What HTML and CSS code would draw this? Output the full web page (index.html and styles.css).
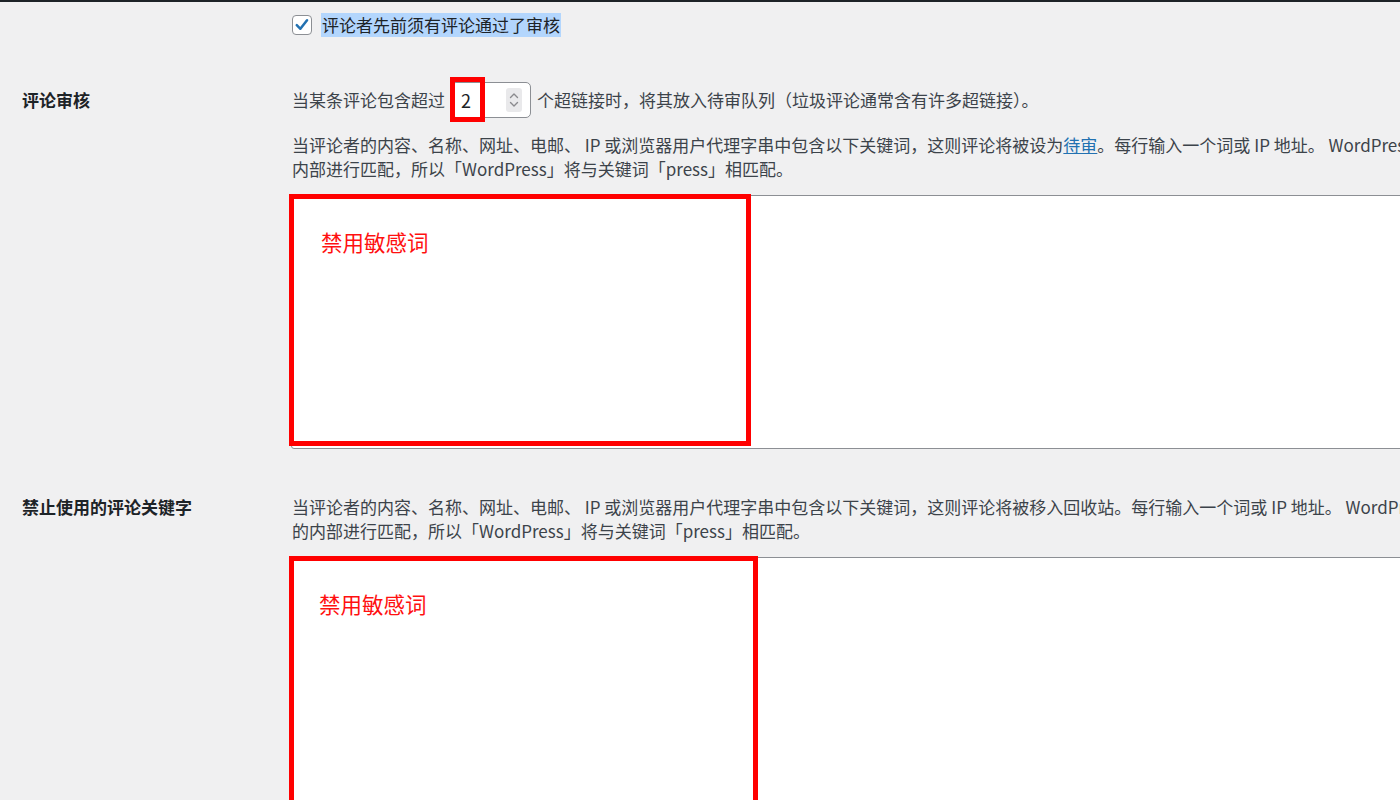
FILE: index.html
```html
<!DOCTYPE html>
<html lang="zh-CN">
<head>
<meta charset="utf-8">
<title>讨论设置</title>
<link rel="stylesheet" href="styles.css">
</head>
<body>
<div class="page">
  <div class="row row-check">
    <div class="th"></div>
    <div class="td">
      <label class="check-line">
        <span class="checkbox">
          <svg viewBox="0 0 20 20" width="20" height="20"><path d="M4.2 10.2 L8.2 14.2 L15.6 4.8" fill="none" stroke="#2271b1" stroke-width="2.8" stroke-linecap="round" stroke-linejoin="round"/></svg>
        </span>
        <span class="selected">评论者先前须有评论通过了审核</span>
      </label>
    </div>
  </div>

  <div class="row row-moderation">
    <div class="th th-input">评论审核</div>
    <div class="td">
      <div class="inline-line">
        <span>当某条评论包含超过</span>
        <span class="number-wrap">
          <span class="number-input">
            <span class="number-value">2</span>
            <span class="spinner">
              <svg viewBox="0 0 16 24" width="16" height="24"><rect x="0" y="0" width="16" height="24" rx="3" fill="#e9e9eb"/><path d="M4.5 9.5 L8 6 L11.5 9.5" fill="none" stroke="#8a8a8e" stroke-width="1.4" stroke-linecap="round" stroke-linejoin="round"/><path d="M4.5 14.5 L8 18 L11.5 14.5" fill="none" stroke="#8a8a8e" stroke-width="1.4" stroke-linecap="round" stroke-linejoin="round"/></svg>
            </span>
          </span>
          <span class="mark mark-number"></span>
        </span>
        <span>个超链接时，将其放入待审队列（垃圾评论通常含有许多超链接）。</span>
      </div>
      <p class="desc desc-first">当评论者的内容、名称、网址、电邮、 IP 或浏览器用户代理字串中包含以下关键词，这则评论将被设为<a href="#">待审</a>。每行输入一个词或 IP 地址。 WordPress 将在词语的内部进行匹配，所以「WordPress」将与关键词「press」相匹配。</p>
      <div class="field">
        <div class="textarea ta-1"></div>
        <div class="mark mark-area mark-area-1"><span class="mark-text">禁用敏感词</span></div>
      </div>
    </div>
  </div>

  <div class="row row-disallowed">
    <div class="th">禁止使用的评论关键字</div>
    <div class="td">
      <p class="desc">当评论者的内容、名称、网址、电邮、 IP 或浏览器用户代理字串中包含以下关键词，这则评论将被移入回收站。每行输入一个词或 IP 地址。 WordPress 将在词语的内部进行匹配，所以「WordPress」将与关键词「press」相匹配。</p>
      <div class="field">
        <div class="textarea ta-2"></div>
        <div class="mark mark-area mark-area-2"><span class="mark-text">禁用敏感词</span></div>
      </div>
    </div>
  </div>
</div>
</body>
</html>
```

FILE: styles.css
```css
html, body {
  margin: 0;
  padding: 0;
  overflow: hidden;
  background: #f0f0f1;
}

body {
  font-family: "Noto Sans CJK SC", "Noto Sans", sans-serif;
  font-size: 17px;
  line-height: 24px;
  color: #3c434a;
  width: 1400px;
  height: 800px;
}

.page {
  border-top: 2px solid #1d2327;
  padding-left: 22px;
  width: 1600px;
}

.row {
  display: grid;
  grid-template-columns: 270px 1214px;
}

.th {
  color: #1d2327;
  font-weight: 600;
  line-height: 24px;
}

.row-check {
  margin-top: 11px;
}

.check-line {
  display: flex;
  align-items: center;
  height: 24px;
  color: #1d2327;
}

.checkbox {
  box-sizing: border-box;
  width: 20px;
  height: 20px;
  border: 1.5px solid #8c8f94;
  border-radius: 4px;
  background: #fff;
  display: flex;
  align-items: center;
  justify-content: center;
  margin-right: 9px;
}

.checkbox svg {
  display: block;
  width: 18px;
  height: 18px;
}

.selected {
  background: #b3d6fd;
  padding: 0 1px;
}

.row-moderation {
  margin-top: 45px;
}

.th-input {
  padding-top: 6px;
}

.inline-line {
  display: flex;
  align-items: center;
  height: 36px;
  gap: 6px;
  white-space: nowrap;
}

.number-wrap {
  position: relative;
  display: block;
  width: 80px;
  height: 36px;
}

.number-input {
  box-sizing: border-box;
  display: flex;
  align-items: center;
  justify-content: space-between;
  width: 80px;
  height: 36px;
  border: 1px solid #8c8f94;
  border-radius: 5px;
  background: #fff;
  padding: 0 8px 0 9px;
  color: #1d2327;
}

.number-value {
  font-size: 18px;
}

.spinner svg {
  display: block;
}

.mark {
  position: absolute;
  box-sizing: border-box;
  border: 5px solid #ff0000;
}

.mark-number {
  left: -1px;
  top: -5px;
  width: 35px;
  height: 45px;
}

.desc {
  margin: 0;
  color: #3c434a;
}

.desc a {
  color: #2271b1;
  text-decoration: underline;
}

.desc-first {
  margin-top: 15px;
}

.field {
  position: relative;
  margin-top: 14px;
}

.textarea {
  box-sizing: border-box;
  background: #fff;
  border: 1px solid #8c8f94;
  border-top-width: 1.5px;
  border-bottom-width: 1.5px;
  border-radius: 3px;
  margin-left: -1px;
}

.ta-1 {
  height: 254px;
}

.ta-2 {
  height: 300px;
}

.mark-area {
  top: -1px;
  left: -3px;
  padding: 28px 0 0 27px;
}

.mark-area-1 {
  width: 462px;
  height: 252px;
}

.mark-area-2 {
  width: 469px;
  height: 300px;
  padding-left: 25px;
}

.mark-text {
  color: #ff1010;
  font-size: 21.5px;
  line-height: 30px;
}

.row-disallowed {
  margin-top: 46px;
}
```
